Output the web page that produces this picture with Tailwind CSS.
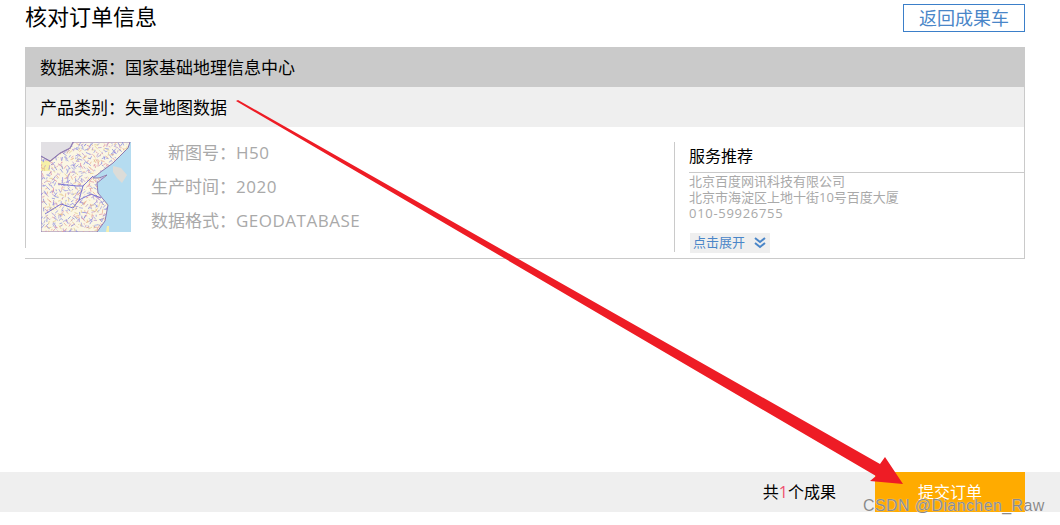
<!DOCTYPE html>
<html lang="zh-CN">
<head>
  <meta charset="UTF-8" />
  <title>核对订单信息</title>
  <script src="https://cdn.jsdelivr.net/npm/@tailwindcss/browser@4"></script>
</head>
<body class="relative h-[525px] w-[1060px] overflow-hidden bg-white font-['Open_Sans','Noto_Sans_CJK_SC',sans-serif] text-black">

  <!-- title row -->
  <div class="flex h-[47px] items-start justify-between pt-1 pr-[35px] pl-[25px]">
    <h1 class="text-[22px] leading-6 font-normal">核对订单信息</h1>
    <a class="flex h-7 w-[122px] items-center justify-center border border-[#3b7fc9] text-[18px] text-[#4a86c8]">返回成果车</a>
  </div>

  <!-- order panel -->
  <div class="mx-[25px] w-[1000px]">
    <div class="flex h-10 items-center bg-[#cacaca] px-[15px] pt-0.5 text-[17px]">数据来源：国家基础地理信息中心</div>
    <div class="flex h-10 items-center border-r border-l border-[#cacaca] bg-[#efefef] px-[14px] pt-0.5 text-[17px]">产品类别：矢量地图数据</div>
    <div class="flex h-[132px] border-r border-b border-[#cacaca]">
      <div class="flex h-[121px] w-[649px] border-l border-[#cacaca] pt-[15px] pl-[15px]">
        <svg id="map" class="h-[90px] w-[90px] shrink-0 blur-[0.4px]" viewBox="0 0 90 90"></svg>
        <dl class="-mt-1.5 ml-[19px] flex flex-col text-[17px] leading-[34px] text-[#a9a9a9]">
          <div class="flex"><dt class="w-[86px] text-right">新图号：</dt><dd class="tracking-[0.5px]">H50</dd></div>
          <div class="flex"><dt class="w-[86px] text-right">生产时间：</dt><dd class="tracking-[0.5px]">2020</dd></div>
          <div class="flex"><dt class="w-[86px] text-right">数据格式：</dt><dd class="tracking-[0.5px]">GEODATABASE</dd></div>
        </dl>
      </div>
      <div class="mt-[15px] h-[110px] flex-1 border-l border-[#cacaca] pl-[14px]">
        <div class="h-[31px] border-b border-[#cacaca] text-[16px] leading-7">服务推荐</div>
        <p class="text-[13px] leading-4 text-[#a9a9a9]">北京百度网讯科技有限公司</p>
        <p class="text-[13px] leading-4 text-[#a9a9a9]">北京市海淀区上地十街10号百度大厦</p>
        <p class="text-[13px] leading-4 tracking-[0.7px] text-[#a9a9a9]">010-59926755</p>
        <a class="mt-3 ml-px flex h-5 w-20 items-center gap-[9px] bg-[#efefef] pl-[3px] text-[13px] text-[#4a86c8]">
          点击展开
          <svg class="h-3 w-3" viewBox="0 0 12 12" fill="none" stroke="#4a86c8" stroke-width="2"><path d="M1 1 6 5 11 1M1 6 6 10 11 6" /></svg>
        </a>
      </div>
    </div>
  </div>

  <!-- bottom bar -->
  <div class="mt-[213px] flex h-10 items-center justify-end bg-[#efefef] pr-[35px]">
    <span class="mr-[39px] text-[16px]">共<span class="text-[#f0506e]">1</span>个成果</span>
    <a class="flex h-10 w-[150px] items-center justify-center bg-[#ffab00] text-[16px] text-white">提交订单</a>
  </div>

  <!-- annotation arrow drawn over the screenshot -->
  <svg class="pointer-events-none absolute top-0 left-0 h-[525px] w-[1060px]" viewBox="0 0 1060 525">
    <path fill="#ee1c25" d="M236 101 238 100 880 464 885 457 903 484 870 481 876 476Z" />
  </svg>

  <!-- watermark -->
  <div class="absolute top-[496px] left-[863px] font-['Liberation_Sans',sans-serif] text-[16px] leading-5 tracking-[0.4px] text-[#8a8a8a] [text-shadow:0_0_1px_#fff]">CSDN @Dianchen_Raw</div>

  <script>
    // thumbnail map: land with a dense road mesh, sea to the east
    let seed = 7;
    function rnd() {
      seed = (seed * 16807) % 2147483647;
      return seed / 2147483647;
    }
    const land = "M0 14 9 19 19 11 29 6 32 0 89 0 87 6 72 21 61 29 52 36 58 36 66 33 56 41 57 51 67 63 64 79 56 90 0 90Z";
    let html = '<rect width="90" height="90" fill="#b5dcf0"/>';
    html += '<path d="M0 0H32L29 6 19 11 9 19 0 14Z" fill="#e2e0e4"/>';
    html += '<path d="M72 24 80 26 86 33 81 41 76 36 72 30Z" fill="#dcdcd8"/>';
    html += '<path d="M65 90 66 84 68 84 68 90Z" fill="#f4efb0"/>';
    html += '<path d="' + land + '" fill="#fbf7e4" stroke="#8d78b0" stroke-width="1"/>';
    html += '<clipPath id="land"><path d="' + land + '"/></clipPath><g clip-path="url(#land)" fill="none">';
    html += '<path d="M0 19H9V29H0Z" fill="#f6f0a8" stroke="none"/>';
    const colors = ["#b58fd0", "#8383e6", "#e8a98c", "#de8aa0", "#9c9ae4", "#e3c98a", "#7f86e0"];
    for (let x = 0; x < 90; x += 3) {
      for (let y = 0; y < 90; y += 3) {
        const px = x + rnd() * 3, py = y + rnd() * 3;
        const qx = px + (rnd() - 0.5) * 8, qy = py + (rnd() - 0.5) * 8;
        const c = colors[Math.floor(rnd() * colors.length)];
        html += '<path d="M' + px + ' ' + py + 'L' + qx + ' ' + qy + '" stroke="' + c + '" stroke-width="0.7"/>';
      }
    }
    html += '<path d="M17 42 36 44 42 44 52 34M42 44 38 58 50 52 60 56M38 58 32 66 20 62 4 72" stroke="#5a55d0" stroke-width="0.8"/>';
    html += '<path d="M0 14 9 19 19 11 29 6 32 0" stroke="#8d78b0" stroke-width="1.5"/></g>';
    document.getElementById("map").innerHTML = html;
  </script>
</body>
</html>
